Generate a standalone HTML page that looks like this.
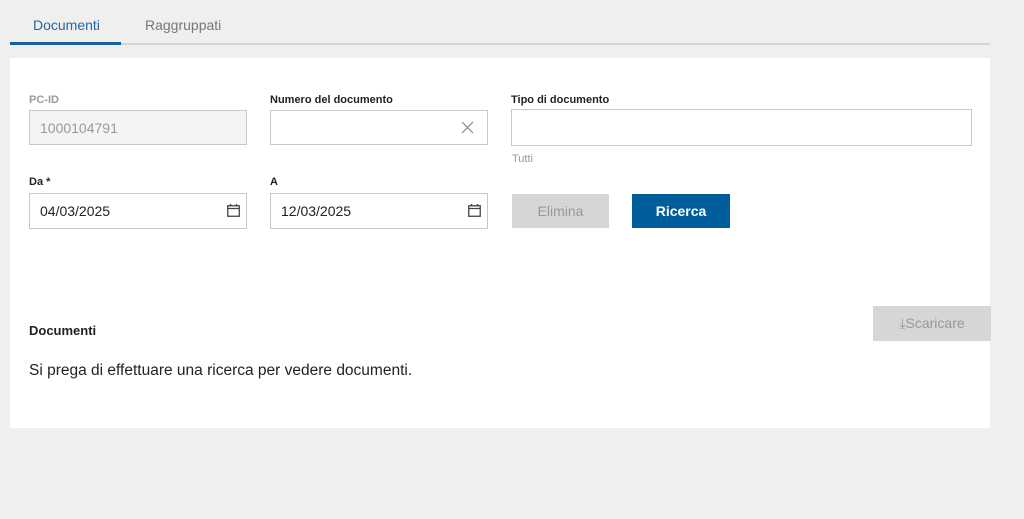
<!DOCTYPE html>
<html><head><meta charset="utf-8"><style>
*{box-sizing:border-box;margin:0;padding:0}
body{width:1024px;height:519px;background:#efefef;font-family:"Liberation Sans",Arial,sans-serif;position:relative;overflow:hidden}
.a{position:absolute}
.lbl{font-size:11px;font-weight:bold;color:#222}
.inp{border:1px solid #c8c8c8;background:#fff;font-size:14px;color:#222;padding-left:10px;display:flex;align-items:center}
.btn{display:flex;align-items:center;justify-content:center;font-size:14px}
</style></head><body>
<div class="a" style="left:10px;top:43px;width:980px;height:2px;background:#d6d6d6"></div>
<div class="a" style="left:10px;top:42px;width:111px;height:3px;background:#1a5fa0"></div>
<div class="a" style="left:33px;top:17px;font-size:14px;color:#2367a8">Documenti</div>
<div class="a" style="left:145px;top:17px;font-size:14px;color:#777">Raggruppati</div>
<div class="a" style="left:10px;top:58px;width:980px;height:370px;background:#fff"></div>
<div class="a lbl" style="left:29px;top:94px;color:#999">PC-ID</div>
<div class="a inp" style="left:29px;top:110px;width:218px;height:35px;background:#f4f4f4;color:#999">1000104791</div>
<div class="a lbl" style="left:270px;top:94px">Numero del documento</div>
<div class="a inp" style="left:270px;top:110px;width:218px;height:35px"></div>
<svg class="a" style="left:461px;top:121px" width="13" height="13" viewBox="0 0 13 13"><path d="M1 1L12 12M12 1L1 12" stroke="#888" stroke-width="1.2"/></svg>
<div class="a lbl" style="left:511px;top:94px">Tipo di documento</div>
<div class="a inp" style="left:511px;top:109px;width:461px;height:37px"></div>
<div class="a" style="left:512px;top:153px;font-size:11px;color:#999">Tutti</div>
<div class="a lbl" style="left:29px;top:176px">Da *</div>
<div class="a inp" style="left:29px;top:193px;width:218px;height:36px">04/03/2025</div>
<div class="a lbl" style="left:270px;top:176px">A</div>
<div class="a inp" style="left:270px;top:193px;width:218px;height:36px">12/03/2025</div>
<svg class="a" style="left:227px;top:203px" width="13" height="14" viewBox="0 0 13 14"><rect x="0.75" y="2.75" width="11.5" height="10.5" fill="none" stroke="#444" stroke-width="1.3"/><path d="M1 5.5H12M3.5 1V3.5M9.5 1V3.5" stroke="#444" stroke-width="1.3"/></svg>
<svg class="a" style="left:468px;top:203px" width="13" height="14" viewBox="0 0 13 14"><rect x="0.75" y="2.75" width="11.5" height="10.5" fill="none" stroke="#444" stroke-width="1.3"/><path d="M1 5.5H12M3.5 1V3.5M9.5 1V3.5" stroke="#444" stroke-width="1.3"/></svg>
<div class="a btn" style="left:512px;top:194px;width:97px;height:34px;background:#d6d6d6;color:#999">Elimina</div>
<div class="a btn" style="left:632px;top:194px;width:98px;height:34px;background:#005f9a;color:#fff;font-weight:bold">Ricerca</div>
<div class="a btn" style="left:873px;top:306px;width:118px;height:35px;background:#d6d6d6;color:#999">⤓Scaricare</div>
<div class="a" style="left:29px;top:323px;font-size:13px;font-weight:bold;color:#222">Documenti</div>
<div class="a" style="left:29px;top:362px;font-size:15.5px;color:#222">Si prega di effettuare una ricerca per vedere documenti.</div>
</body></html>
